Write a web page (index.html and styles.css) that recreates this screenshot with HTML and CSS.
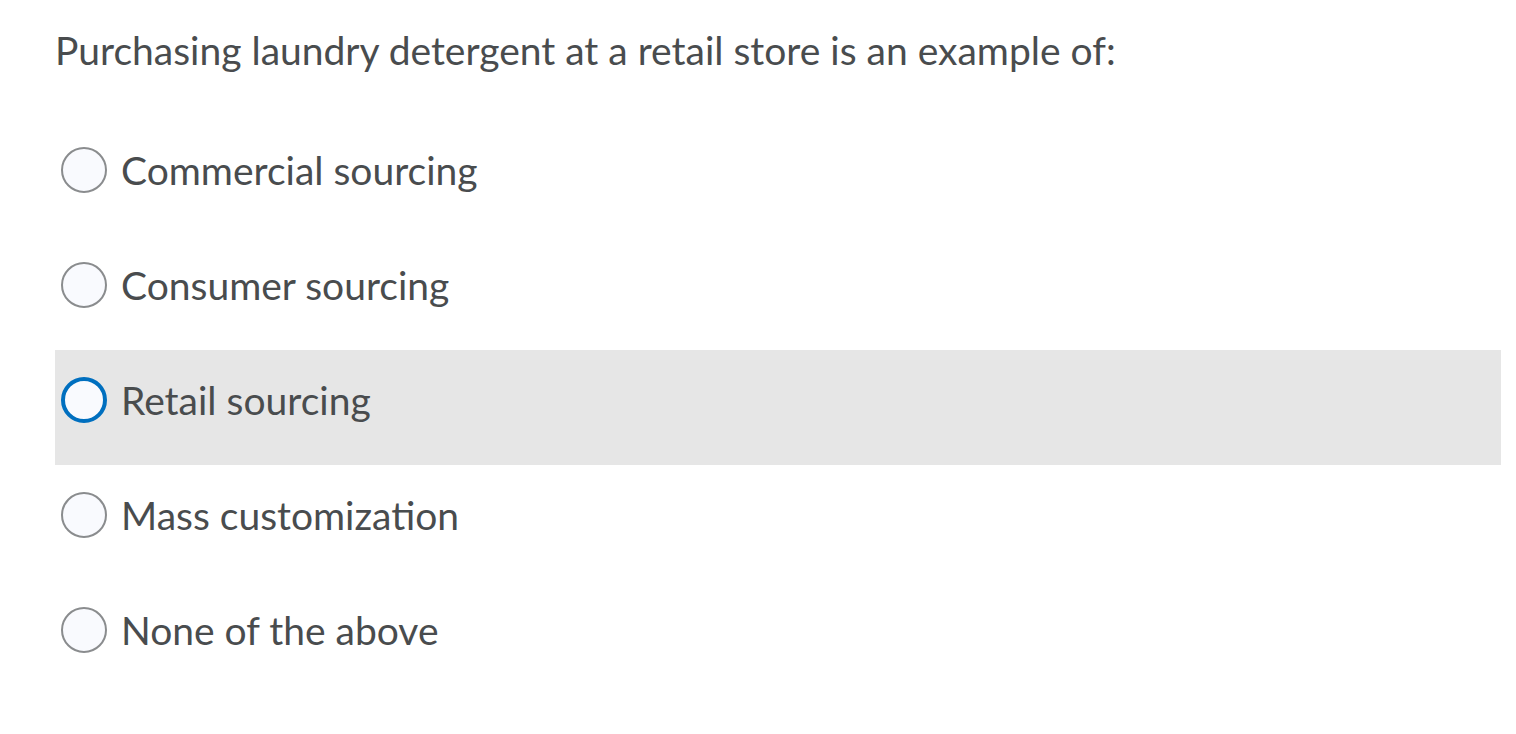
FILE: index.html
```html
<!DOCTYPE html>
<html>
<head>
<meta charset="utf-8">
<link rel="stylesheet" href="styles.css">
</head>
<body>
<div class="quiz">
  <p class="question">Purchasing laundry detergent at a retail store is an example of:</p>
  <div class="options">
    <label class="option"><span class="radio"></span><span class="text">Commercial sourcing</span></label>
    <label class="option"><span class="radio"></span><span class="text">Consumer sourcing</span></label>
    <label class="option focused"><span class="radio"></span><span class="text">Retail sourcing</span></label>
    <label class="option"><span class="radio"></span><span class="text">Mass customization</span></label>
    <label class="option"><span class="radio"></span><span class="text">None of the above</span></label>
  </div>
</div>
</body>
</html>
```
FILE: styles.css
```css
html, body {
  margin: 0;
  padding: 0;
  background: #ffffff;
}
body {
  font-family: Lato, "Noto Sans", sans-serif;
  color: #494c4e;
}
.quiz {
  padding: 24px 15px 0 55px;
}
.question {
  margin: 0;
  font-size: 39px;
  line-height: 52px;
  height: 96px;
}
.options {
  display: flex;
  flex-direction: column;
}
.option {
  display: flex;
  align-items: center;
  height: 46px;
  padding: 27px 0 42px 6px;
  gap: 14px;
}
.option.focused {
  background: #e6e6e6;
}
.radio {
  width: 42px;
  height: 42px;
  border-radius: 50%;
  border: 2px solid #8a8c8e;
  background: #f9fafe;
  flex: none;
}
.focused .radio {
  width: 38px;
  height: 38px;
  border: 4px solid #006fbf;
}
.text {
  font-size: 39px;
  line-height: 46px;
}
```
